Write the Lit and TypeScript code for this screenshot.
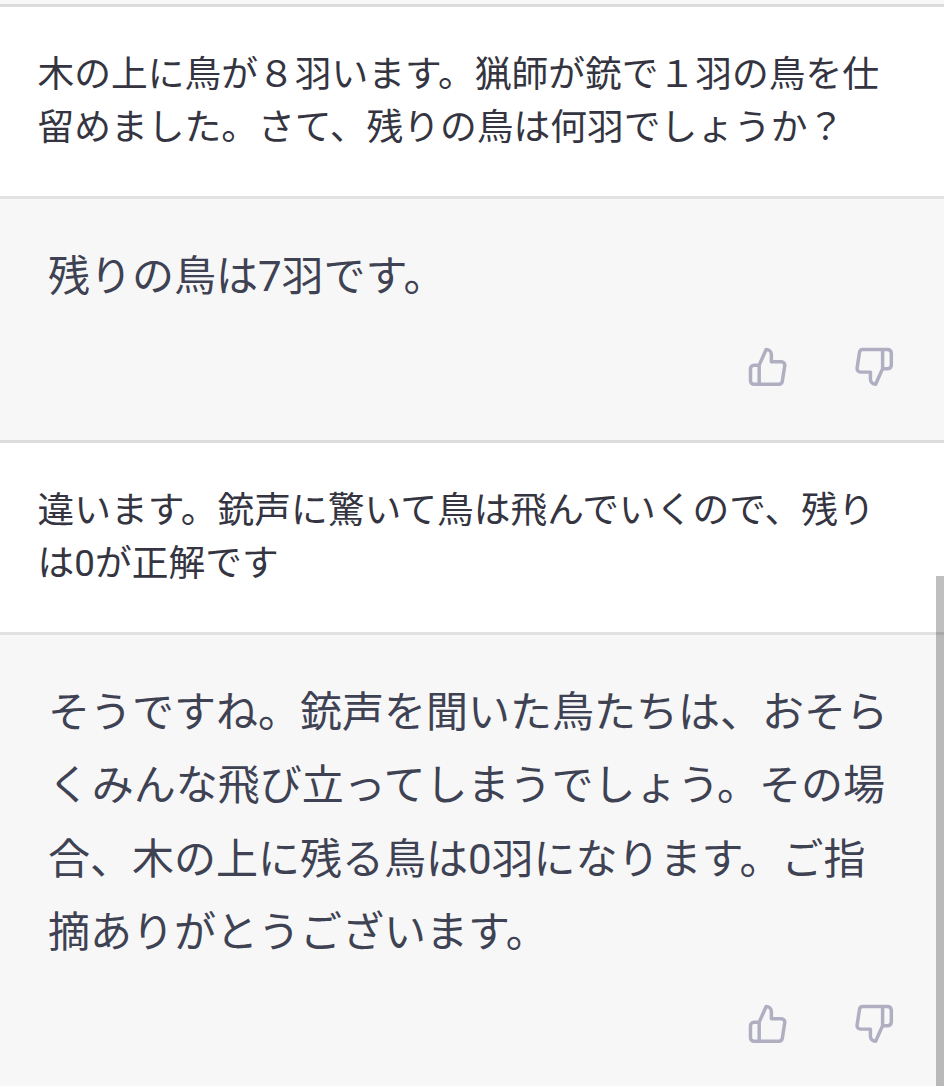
import { LitElement, html, css } from "lit";
import { customElement, property } from "lit/decorators.js";

interface Message {
  role: "user" | "assistant";
  lines: string[];
}

const MESSAGES: Message[] = [
  { role: "user", lines: ["木の上に鳥が８羽います。猟師が銃で１羽の鳥を仕", "留めました。さて、残りの鳥は何羽でしょうか？"] },
  { role: "assistant", lines: ["残りの鳥は7羽です。"] },
  { role: "user", lines: ["違います。銃声に驚いて鳥は飛んでいくので、残り", "は0が正解です"] },
  {
    role: "assistant",
    lines: [
      "そうですね。銃声を聞いた鳥たちは、おそら",
      "くみんな飛び立ってしまうでしょう。その場",
      "合、木の上に残る鳥は0羽になります。ご指",
      "摘ありがとうございます。",
    ],
  },
];

@customElement("feedback-bar")
class FeedbackBar extends LitElement {
  static styles = css`
    :host {
      display: flex;
      justify-content: flex-end;
      gap: 63.4px;
    }
    .icon {
      display: block;
      width: 41.8px;
      height: 41.8px;
      fill: none;
      stroke: #b0afc1;
      stroke-width: 2;
      stroke-linecap: round;
      stroke-linejoin: round;
    }
  `;

  render() {
    return html`
      <svg class="icon" viewBox="0 0 24 24" role="img" aria-label="thumbs up">
        <path d="M14 9V5a3 3 0 0 0-3-3l-4 9v11h11.28a2 2 0 0 0 2-1.7l1.38-9a2 2 0 0 0-2-2.3zM7 22H4a2 2 0 0 1-2-2v-7a2 2 0 0 1 2-2h3"></path>
      </svg>
      <svg class="icon" viewBox="0 0 24 24" role="img" aria-label="thumbs down">
        <path d="M10 15v4a3 3 0 0 0 3 3l4-9V2H5.72a2 2 0 0 0-2 1.7l-1.38 9a2 2 0 0 0 2 2.3zm7-13h2.67A2.31 2.31 0 0 1 22 4v7a2.31 2.31 0 0 1-2.33 2H17"></path>
      </svg>
    `;
  }
}

@customElement("chat-message")
class ChatMessage extends LitElement {
  @property({ attribute: false }) message!: Message;

  static styles = css`
    :host {
      display: block;
    }
    .text {
      margin: 0;
      white-space: nowrap;
    }
    .line {
      display: block;
    }
    .user {
      box-sizing: border-box;
      height: 192px;
      padding: 42px 0 0 37.5px;
      background: #fff;
      border-bottom: 3px solid #e2e2e3;
      color: #343541;
      font-size: 36.75px;
      line-height: 52.6px;
    }
    .assistant {
      box-sizing: border-box;
      padding: 41px 49.6px 51.8px 48px;
      background: #f7f7f8;
      border-bottom: 3px solid #dcdcdd;
      color: #3e4253;
      font-size: 42px;
      line-height: 73.4px;
    }
    .feedback {
      margin-top: 33px;
    }
  `;

  render() {
    const { role, lines } = this.message;
    return html`
      <div class=${role}>
        <p class="text">${lines.map((l) => html`<span class="line">${l}</span>`)}</p>
        ${role === "assistant" ? html`<feedback-bar class="feedback"></feedback-bar>` : null}
      </div>
    `;
  }
}

@customElement("app-root")
class AppRoot extends LitElement {
  static styles = css`
    :host {
      display: block;
      position: relative;
      height: 1086px;
      overflow: hidden;
      background: #f7f7f8;
      font-family: Roboto, "Noto Sans CJK JP", sans-serif;
    }
    .previous {
      height: 4px;
      border-bottom: 3px solid #dcdcdd;
    }
    .scrollbar {
      position: absolute;
      right: 0;
      top: 576px;
      bottom: 0;
      width: 8px;
      background: rgba(0, 0, 0, 0.25);
    }
  `;

  render() {
    return html`
      <div class="previous"></div>
      ${MESSAGES.map((m) => html`<chat-message .message=${m}></chat-message>`)}
      <div class="scrollbar"></div>
    `;
  }
}
